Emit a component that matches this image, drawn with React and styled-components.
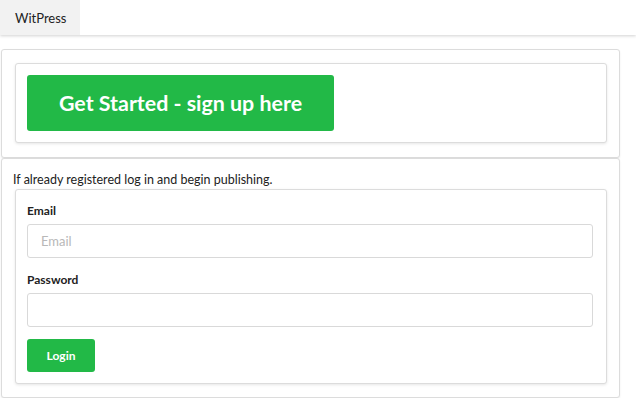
import React from "react";
import styled, { createGlobalStyle } from "styled-components";

const GlobalStyle = createGlobalStyle`
  html, body { margin: 0; padding: 0; background: #fff; }
  body { font-family: Lato, "Open Sans", "Liberation Sans", sans-serif; color: #222; }
  * { box-sizing: border-box; }
`;

const Navbar = styled.nav`
  height: 35px;
  display: flex;
  align-items: stretch;
  background: #fff;
  box-shadow: 0 1px 3px rgba(0, 0, 0, 0.18);
`;

const Brand = styled.a`
  display: flex;
  align-items: center;
  width: 80px;
  padding-left: 15px;
  background: #f2f2f2;
  font-size: 13px;
  color: #222;
  text-decoration: none;
`;

const Main = styled.main`
  padding: 14px 16px 0 1px;
  display: flex;
  flex-direction: column;
`;

const Card = styled.section`
  border: 1px solid #dcdcdc;
  border-radius: 3px;
  background: #fff;
  box-shadow: 0 1px 2px rgba(0, 0, 0, 0.08);
  padding: ${(p) => p.$pad || "13px"};
  display: flex;
  flex-direction: column;
`;

const InnerCard = styled.div`
  border: 1px solid #dcdcdc;
  border-radius: 3px;
  background: #fff;
  box-shadow: 0 1px 3px rgba(0, 0, 0, 0.1);
  padding: 11px;
  display: flex;
  flex-direction: column;
  align-items: flex-start;
`;

const Button = styled.button`
  border: none;
  border-radius: 3px;
  background: #22b947;
  color: #fff;
  font-family: Lato, "Open Sans", "Liberation Sans", sans-serif;
  font-weight: 700;
  font-size: ${(p) => (p.$big ? "21.4px" : "12px")};
  width: ${(p) => (p.$big ? "307px" : "68px")};
  height: ${(p) => (p.$big ? "56px" : "33px")};
  padding: 0;
  cursor: pointer;
`;

const Intro = styled.p`
  margin: 0;
  font-size: 12.5px;
  line-height: 18px;
`;

const Form = styled(InnerCard).attrs({ as: "form" })`
  align-items: stretch;
  margin-left: 2px;
  padding: 12px 13px 11px 11px;
`;

const Label = styled.label`
  font-size: 12px;
  font-weight: 700;
  line-height: 17px;
  margin-bottom: 5px;
  margin-top: ${(p) => (p.$first ? "0" : "13px")};
`;

const Input = styled.input`
  height: 34px;
  border: 1px solid #d9d9d9;
  border-radius: 3px;
  padding: 0 13px;
  font-family: Lato, "Open Sans", "Liberation Sans", sans-serif;
  font-size: 13px;
  color: #222;
  outline: none;
  &::placeholder { color: #b8b8b8; }
`;

const Actions = styled.div`
  margin-top: 12px;
  display: flex;
`;

export default function App() {
  return (
    <>
      <GlobalStyle />
      <Navbar>
        <Brand href="#">WitPress</Brand>
      </Navbar>
      <Main>
        <Card $pad="13px 12px 14px 13px">
          <InnerCard>
            <Button $big type="button">Get Started - sign up here</Button>
          </InnerCard>
        </Card>
        <Card $pad="12px 12px 13px 11px">
          <Intro>If already registered log in and begin publishing.</Intro>
          <Form onSubmit={(e) => e.preventDefault()}>
            <Label $first htmlFor="email">Email</Label>
            <Input id="email" type="email" placeholder="Email" />
            <Label htmlFor="password">Password</Label>
            <Input id="password" type="password" />
            <Actions>
              <Button type="submit">Login</Button>
            </Actions>
          </Form>
        </Card>
      </Main>
    </>
  );
}
